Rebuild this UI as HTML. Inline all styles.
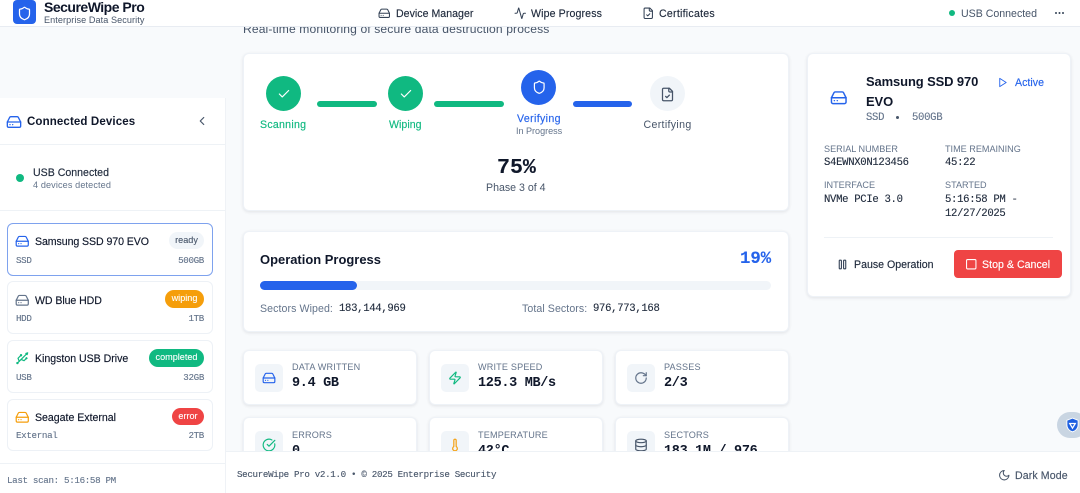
<!DOCTYPE html>
<html lang="en"><head><meta charset="utf-8"><title>SecureWipe Pro</title>
<style>
*{box-sizing:border-box;margin:0;padding:0}
html,body{width:1080px;height:493px;overflow:hidden;background:#f8fafc}
body{position:relative;font-family:"Liberation Sans",sans-serif;color:#0f172a}
.a{position:absolute}
.t{position:absolute;white-space:nowrap;line-height:14px;height:14px;font-size:10.6px;margin-top:1px}
.m{font-family:"Liberation Mono",monospace;letter-spacing:-.31px;-webkit-text-stroke:.12px currentColor}
.md{-webkit-text-stroke:.15px currentColor}
.b{font-weight:700}
.x{font-size:9.1px;margin-top:0}
.x.m{font-size:9.2px;letter-spacing:-.33px}
.g{color:#64748b}
.s{color:#475569}
.card{position:absolute;background:#fff;border:1px solid #eef2f7;border-radius:6px;box-shadow:0 1px 3px rgba(15,23,42,.1)}
.ic{position:absolute;fill:none;stroke:currentColor;stroke-width:2;stroke-linecap:round;stroke-linejoin:round}
.circ{position:absolute;width:35px;height:35px;border-radius:50%}
.bar{position:absolute;height:6px;border-radius:3px}
.ibox{position:absolute;width:28px;height:28px;border-radius:5px;background:#f1f5f9}
.lab{position:absolute;white-space:nowrap;line-height:14px;height:14px;font-size:9.1px;color:#64748b;letter-spacing:.17px}
.val{position:absolute;white-space:nowrap;line-height:16px;height:16px;font-size:13.5px;letter-spacing:-.32px;font-weight:700;font-family:"Liberation Mono",monospace;color:#0f172a}
.badge{position:absolute;height:17.5px;border-radius:9px;font-size:9.1px;line-height:17px;text-align:center;color:#fff;-webkit-text-stroke:.1px currentColor}
.dev{position:absolute;left:7px;width:206px;background:#fff;border:1px solid #edf1f6;border-radius:6px}
</style></head><body>
<svg width="0" height="0" style="position:absolute">
<defs>
<symbol id="hd" viewBox="0 0 24 24"><path d="M22 12H2"/><path d="M5.45 5.11 2 12v6a2 2 0 0 0 2 2h16a2 2 0 0 0 2-2v-6l-3.45-6.89A2 2 0 0 0 16.76 4H7.24a2 2 0 0 0-1.79 1.11z"/><path d="M6 16h.01"/><path d="M10 16h.01"/></symbol>
<symbol id="sh" viewBox="0 0 24 24"><path d="M20 13c0 5-3.5 7.5-7.66 8.95a1 1 0 0 1-.67-.01C7.5 20.5 4 18 4 13V6a1 1 0 0 1 1-1c2 0 4.5-1.2 6.24-2.72a1.17 1.17 0 0 1 1.52 0C14.51 3.81 17 5 19 5a1 1 0 0 1 1 1z"/></symbol>
<symbol id="ck" viewBox="0 0 24 24"><path d="M20 6 9 17l-5-5"/></symbol>
<symbol id="ac" viewBox="0 0 24 24"><path d="M22 12h-2.48a2 2 0 0 0-1.93 1.46l-2.35 8.36a.25.25 0 0 1-.48 0L9.24 2.18a.25.25 0 0 0-.48 0l-2.35 8.36A2 2 0 0 1 4.49 12H2"/></symbol>
<symbol id="fc" viewBox="0 0 24 24"><path d="M15 2H6a2 2 0 0 0-2 2v16a2 2 0 0 0 2 2h12a2 2 0 0 0 2-2V7Z"/><path d="M14 2v4a2 2 0 0 0 2 2h4"/><path d="m9 15 2 2 4-4"/></symbol>
<symbol id="us" viewBox="0 0 24 24"><circle cx="10" cy="7" r="1"/><circle cx="4" cy="20" r="1"/><path d="M4.7 19.3 19 5"/><path d="m21 3-3 1 2 2Z"/><path d="M9.26 7.68 5 12l2 5"/><path d="m10 14 5 2 3.5-3.5"/><path d="m18 12 1-1 1 1-1 1Z"/></symbol>
<symbol id="zp" viewBox="0 0 24 24"><path d="M4 14a1 1 0 0 1-.78-1.63l9.9-10.2a.5.5 0 0 1 .86.46l-1.92 6.02A1 1 0 0 0 13 10h7a1 1 0 0 1 .78 1.63l-9.9 10.2a.5.5 0 0 1-.86-.46l1.92-6.02A1 1 0 0 0 11 14z"/></symbol>
<symbol id="rt" viewBox="0 0 24 24"><path d="M21 12a9 9 0 1 1-9-9c2.52 0 4.93 1 6.74 2.74L21 8"/><path d="M21 3v5h-5"/></symbol>
<symbol id="cc" viewBox="0 0 24 24"><path d="M21.801 10A10 10 0 1 1 17 3.335"/><path d="m9 11 3 3L22 4"/></symbol>
<symbol id="th" viewBox="0 0 24 24"><path d="M14 4v10.54a4 4 0 1 1-4 0V4a2 2 0 0 1 4 0Z"/></symbol>
<symbol id="db" viewBox="0 0 24 24"><ellipse cx="12" cy="5" rx="9" ry="3"/><path d="M3 5V19A9 3 0 0 0 21 19V5"/><path d="M3 12A9 3 0 0 0 21 12"/></symbol>
<symbol id="pl" viewBox="0 0 24 24"><polygon points="6 3 20 12 6 21 6 3"/></symbol>
<symbol id="pa" viewBox="0 0 24 24"><rect x="14" y="4" width="4" height="16" rx="1"/><rect x="6" y="4" width="4" height="16" rx="1"/></symbol>
<symbol id="sq" viewBox="0 0 24 24"><rect x="3" y="3" width="18" height="18" rx="2"/></symbol>
<symbol id="mo" viewBox="0 0 24 24"><path d="M12 3a6 6 0 0 0 9 9 9 9 0 1 1-9-9Z"/></symbol>
<symbol id="cl" viewBox="0 0 24 24"><path d="m15 18-6-6 6-6"/></symbol>
</defs></svg>

<!-- main -->
<div class="t s" style="left:243px;top:21px;font-size:12.1px;letter-spacing:.12px">Real-time monitoring of secure data destruction process</div>

<!-- stepper card -->
<div class="card" style="left:243px;top:53px;width:546px;height:158px"></div>
<div class="circ" style="left:265.5px;top:76px;background:#10b981"></div>
<svg class="ic" style="left:276.500px;top:86.500px;color:#fff" width="14" height="14"><use href="#ck"/></svg>
<div class="t md" style="left:260px;top:117px;color:#10b981;letter-spacing:.26px">Scanning</div>
<div class="bar" style="left:317px;top:100.5px;width:60px;background:#10b981"></div>
<div class="circ" style="left:388px;top:76px;background:#10b981"></div>
<svg class="ic" style="left:398.500px;top:86.500px;color:#fff" width="14" height="14"><use href="#ck"/></svg>
<div class="t md" style="left:389px;top:117px;color:#10b981;letter-spacing:.03px">Wiping</div>
<div class="bar" style="left:434px;top:100.5px;width:70px;background:#10b981"></div>
<div class="circ" style="left:521px;top:70px;background:#2563eb"></div>
<svg class="ic" style="left:531.500px;top:80px;color:#fff" width="14.500" height="14.500"><use href="#sh"/></svg>
<div class="t md" style="left:517px;top:111px;color:#2563eb;letter-spacing:.36px">Verifying</div>
<div class="t x g" style="left:516px;top:124px;letter-spacing:-.03px">In Progress</div>
<div class="bar" style="left:573px;top:100.5px;width:59px;background:#2563eb"></div>
<div class="circ" style="left:650px;top:76px;background:#f1f5f9"></div>
<svg class="ic" style="left:660px;top:86.500px;color:#475569" width="15" height="15"><use href="#fc"/></svg>
<div class="t s" style="left:643.500px;top:117px;letter-spacing:.33px">Certifying</div>
<div class="t m b" style="left:497px;top:160px;font-size:21.6px;letter-spacing:0">75%</div>
<div class="t s" style="left:486px;top:180px;letter-spacing:0">Phase 3 of 4</div>

<!-- progress card -->
<div class="card" style="left:243px;top:231px;width:546px;height:101px"></div>
<div class="t b" style="left:260px;top:252px;font-size:12.96px;letter-spacing:0">Operation Progress</div>
<div class="t m b" style="left:740px;top:252px;font-size:17.28px;letter-spacing:0;color:#2563eb">19%</div>
<div class="a" style="left:260px;top:281px;width:511px;height:9px;border-radius:5px;background:#f1f5f9"></div>
<div class="a" style="left:260px;top:281px;width:97px;height:9px;border-radius:5px;background:#2563eb"></div>
<div class="t g" style="left:260px;top:301px;letter-spacing:.08px">Sectors Wiped:</div>
<div class="t m" style="left:339px;top:301px;color:#1e293b">183,144,969</div>
<div class="t g" style="left:522px;top:301px;letter-spacing:.08px">Total Sectors:</div>
<div class="t m" style="left:593px;top:301px;color:#1e293b">976,773,168</div>

<!-- stats -->
<div class="card" style="left:243px;top:350px;width:174px;height:55px"></div>
<div class="ibox" style="left:255px;top:363.5px"></div>
<svg class="ic" style="left:262px;top:370.500px;color:#2563eb" width="14" height="14"><use href="#hd"/></svg>
<div class="lab" style="left:292px;top:360px">DATA WRITTEN</div>
<div class="val" style="left:292px;top:375.500px">9.4 GB</div>

<div class="card" style="left:429px;top:350px;width:174px;height:55px"></div>
<div class="ibox" style="left:441px;top:363.5px"></div>
<svg class="ic" style="left:448px;top:370.500px;color:#10b981" width="14" height="14"><use href="#zp"/></svg>
<div class="lab" style="left:478px;top:360px">WRITE SPEED</div>
<div class="val" style="left:478px;top:375.500px">125.3 MB/s</div>

<div class="card" style="left:615px;top:350px;width:174px;height:55px"></div>
<div class="ibox" style="left:627px;top:363.5px"></div>
<svg class="ic" style="left:634px;top:370.500px;color:#64748b" width="14" height="14"><use href="#rt"/></svg>
<div class="lab" style="left:664px;top:360px">PASSES</div>
<div class="val" style="left:664px;top:375.500px">2/3</div>

<div class="card" style="left:243px;top:417px;width:174px;height:55px"></div>
<div class="ibox" style="left:255px;top:431px"></div>
<svg class="ic" style="left:262px;top:438px;color:#10b981" width="14" height="14"><use href="#cc"/></svg>
<div class="lab" style="left:292px;top:428px">ERRORS</div>
<div class="val" style="left:292px;top:443.500px">0</div>

<div class="card" style="left:429px;top:417px;width:174px;height:55px"></div>
<div class="ibox" style="left:441px;top:431px"></div>
<svg class="ic" style="left:448px;top:438px;color:#f59e0b" width="14" height="14"><use href="#th"/></svg>
<div class="lab" style="left:478px;top:428px">TEMPERATURE</div>
<div class="val" style="left:478px;top:443.500px">42°C</div>

<div class="card" style="left:615px;top:417px;width:174px;height:55px"></div>
<div class="ibox" style="left:627px;top:431px"></div>
<svg class="ic" style="left:634px;top:438px;color:#475569" width="14" height="14"><use href="#db"/></svg>
<div class="lab" style="left:664px;top:428px">SECTORS</div>
<div class="val" style="left:664px;top:443.500px">183.1M / 976</div>

<!-- right card -->
<div class="card" style="left:807px;top:53px;width:264px;height:244px"></div>
<svg class="ic" style="left:830px;top:88.500px;color:#2563eb" width="17.500" height="17.500"><use href="#hd"/></svg>
<div class="t b" style="left:866px;top:74px;font-size:12.96px;letter-spacing:-.1px">Samsung SSD 970</div>
<div class="t b" style="left:866px;top:94px;font-size:12.96px;letter-spacing:-.1px">EVO</div>
<div class="t m g" style="left:866px;top:110px">SSD</div>
<div class="a" style="left:896px;top:116px;width:3px;height:3px;border-radius:50%;background:#475569"></div>
<div class="t m g" style="left:912px;top:110px">500GB</div>
<svg class="ic" style="left:997.300px;top:76.500px;color:#2563eb" width="11" height="11"><use href="#pl"/></svg>
<div class="t md" style="left:1015px;top:75px;color:#2563eb;letter-spacing:.03px">Active</div>
<div class="lab" style="left:824px;top:142px;letter-spacing:0">SERIAL NUMBER</div>
<div class="t m" style="left:824px;top:155px;color:#1e293b">S4EWNX0N123456</div>
<div class="lab" style="left:945px;top:142px;letter-spacing:0">TIME REMAINING</div>
<div class="t m" style="left:945px;top:155px;color:#1e293b">45:22</div>
<div class="lab" style="left:824px;top:177.500px;letter-spacing:0">INTERFACE</div>
<div class="t m" style="left:824px;top:192px;color:#1e293b">NVMe PCIe 3.0</div>
<div class="lab" style="left:945px;top:177.500px;letter-spacing:0">STARTED</div>
<div class="t m" style="left:945px;top:192px;color:#1e293b">5:16:58 PM -</div>
<div class="t m" style="left:945px;top:206px;color:#1e293b">12/27/2025</div>
<div class="a" style="left:824px;top:237px;width:229px;height:1px;background:#eef2f6"></div>
<svg class="ic" style="left:835.500px;top:258px;color:#334155" width="13" height="13"><use href="#pa"/></svg>
<div class="t md" style="left:854px;top:257px;color:#1e293b;letter-spacing:0">Pause Operation</div>
<div class="a" style="left:954px;top:250px;width:108px;height:28px;border-radius:4px;background:#ef4444"></div>
<svg class="ic" style="left:965px;top:258px;color:#fff" width="12.500" height="12.500"><use href="#sq"/></svg>
<div class="t md" style="left:982px;top:257px;color:#fff;letter-spacing:.03px">Stop &amp; Cancel</div>

<!-- sidebar -->
<div class="a" style="left:0;top:98px;width:226px;height:395px;background:#fff;border-right:1px solid #eff2f6"></div>
<svg class="ic" style="left:6px;top:113.500px;color:#2563eb" width="16" height="16"><use href="#hd"/></svg>
<div class="t b" style="left:27px;top:114px;font-size:11.52px;letter-spacing:.12px">Connected Devices</div>
<svg class="ic" style="left:195px;top:114px;color:#475569" width="14" height="14"><use href="#cl"/></svg>
<div class="a" style="left:0;top:144px;width:225px;height:1px;background:#eef2f6"></div>
<div class="a" style="left:16px;top:173.500px;width:8px;height:8px;border-radius:50%;background:#10b981"></div>
<div class="t md" style="left:33px;top:165px;color:#1e293b;letter-spacing:0">USB Connected</div>
<div class="t x g" style="left:33px;top:178px;letter-spacing:.12px">4 devices detected</div>
<div class="a" style="left:0;top:210px;width:225px;height:1px;background:#eef2f6"></div>

<div class="dev" style="top:222.500px;height:53.500px;border-color:#7ea2ee"></div>
<svg class="ic" style="left:15.300px;top:233.700px;color:#2563eb" width="14.500" height="14.500"><use href="#hd"/></svg>
<div class="t md" style="left:35px;top:234px;letter-spacing:-.08px">Samsung SSD 970 EVO</div>
<div class="badge" style="left:169px;top:231.700px;width:35px;background:#f1f5f9;color:#475569">ready</div>
<div class="t x m g" style="left:16px;top:254px">SSD</div>
<div class="t x m g" style="right:876px;top:254px">500GB</div>

<div class="dev" style="top:281.300px;height:52.700px"></div>
<svg class="ic" style="left:15.300px;top:292.500px;color:#64748b" width="14.500" height="14.500"><use href="#hd"/></svg>
<div class="t md" style="left:35px;top:292.500px;letter-spacing:-.08px">WD Blue HDD</div>
<div class="badge" style="left:165px;top:290.300px;width:39px;background:#f59e0b">wiping</div>
<div class="t x m g" style="left:16px;top:312px">HDD</div>
<div class="t x m g" style="right:876px;top:312px">1TB</div>

<div class="dev" style="top:340px;height:52.500px"></div>
<svg class="ic" style="left:15.300px;top:351px;color:#10b981" width="14.500" height="14.500"><use href="#us"/></svg>
<div class="t md" style="left:35px;top:351px;letter-spacing:-.02px">Kingston USB Drive</div>
<div class="badge" style="left:149px;top:349px;width:55px;background:#10b981">completed</div>
<div class="t x m g" style="left:16px;top:371px">USB</div>
<div class="t x m g" style="right:876px;top:371px">32GB</div>

<div class="dev" style="top:398.500px;height:52.500px"></div>
<svg class="ic" style="left:15.300px;top:409.700px;color:#f59e0b" width="14.500" height="14.500"><use href="#hd"/></svg>
<div class="t md" style="left:35px;top:410px;letter-spacing:-.02px">Seagate External</div>
<div class="badge" style="left:172px;top:407.700px;width:32px;background:#ef4444">error</div>
<div class="t x m g" style="left:16px;top:429px">External</div>
<div class="t x m g" style="right:876px;top:429px">2TB</div>

<div class="a" style="left:0;top:463px;width:225px;height:1px;background:#eef2f6"></div>
<div class="t x m g" style="left:7px;top:474px">Last scan: 5:16:58 PM</div>

<!-- footer -->
<div class="a" style="left:226px;top:451px;width:854px;height:42px;background:#fff;border-top:1px solid #eef2f6"></div>
<div class="t x m s" style="left:237px;top:468px">SecureWipe Pro v2.1.0 • © 2025 Enterprise Security</div>
<svg class="ic" style="left:997.500px;top:468.500px;color:#475569" width="12.500" height="12.500"><use href="#mo"/></svg>
<div class="t md s" style="left:1015px;top:468px;letter-spacing:.1px">Dark Mode</div>

<!-- floating widget -->
<div class="a" style="left:1057px;top:412px;width:30px;height:26px;border-radius:13px;background:#c9d5e2"></div>
<svg class="a" style="left:1065px;top:416.500px" width="15" height="16" viewBox="0 0 24 24"><path d="M12 1 3 4.500V12c0 5.500 4 9.500 9 11 5-1.500 9-5.500 9-11V4.500z" fill="#1d5fe0" stroke="#fff" stroke-width="1.500"/><path d="M7.500 9.500 12 17l4.500-7.500z" fill="none" stroke="#fff" stroke-width="2"/></svg>

<!-- header -->
<div class="a" style="left:0;top:0;width:1080px;height:27px;background:#fff;border-bottom:1px solid #e8ecf2"></div>
<div class="a" style="left:12.700px;top:0;width:23px;height:24px;background:#2563eb;border-radius:4px"></div>
<svg class="ic" style="left:17px;top:5.500px;color:#fff" width="15" height="15"><use href="#sh"/></svg>
<div class="t b" style="left:44px;top:-1px;font-size:14px;letter-spacing:-.5px">SecureWipe Pro</div>
<div class="t x s" style="left:44px;top:13px;letter-spacing:.08px">Enterprise Data Security</div>
<svg class="ic" style="left:377.500px;top:6.500px;color:#334155" width="12.500" height="12.500"><use href="#hd"/></svg>
<div class="t md" style="left:396px;top:5.500px;color:#1e293b;letter-spacing:.02px">Device Manager</div>
<svg class="ic" style="left:514px;top:6.500px;color:#334155" width="12.500" height="12.500"><use href="#ac"/></svg>
<div class="t md" style="left:531px;top:5.500px;color:#1e293b;letter-spacing:.12px">Wipe Progress</div>
<svg class="ic" style="left:641.500px;top:6.500px;color:#334155" width="12.500" height="12.500"><use href="#fc"/></svg>
<div class="t md" style="left:659px;top:5.500px;color:#1e293b;letter-spacing:.25px">Certificates</div>
<div class="a" style="left:949px;top:10px;width:6px;height:6px;border-radius:50%;background:#10b981"></div>
<div class="t s" style="left:961px;top:5.500px;letter-spacing:0">USB Connected</div>
<div class="a" style="left:1055px;top:11.500px;width:2px;height:2px;border-radius:50%;background:#334155;box-shadow:3.500px 0 0 #334155,7px 0 0 #334155"></div>
</body></html>
